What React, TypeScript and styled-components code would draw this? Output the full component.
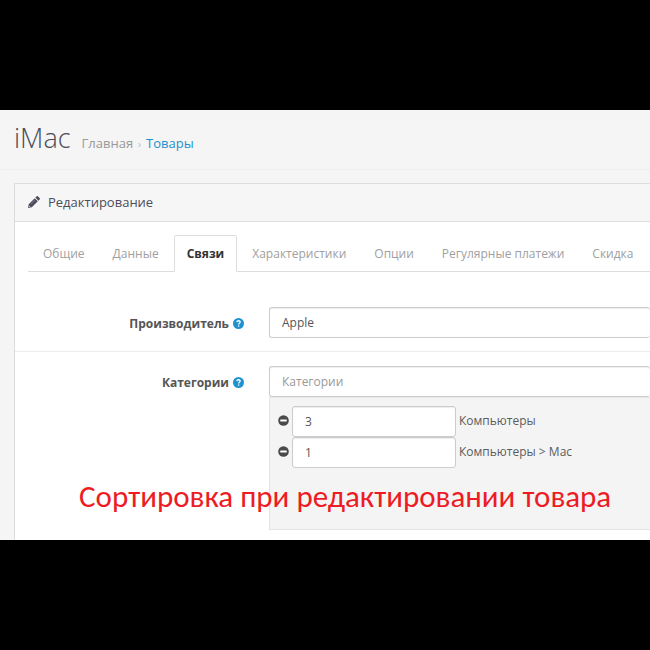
import React from "react";
import styled, { createGlobalStyle } from "styled-components";

const GlobalStyle = createGlobalStyle`
  *, *::before, *::after { box-sizing: border-box; }
  body {
    margin: 0;
    background: #000;
    color: #5c5c5c;
    font-family: "Open Sans", "Noto Sans", sans-serif;
    font-size: 12px;
    line-height: 18px;
  }
`;

const Frame = styled.div`
  min-height: 100vh;
  padding: 110px 0;
  background: #000;
`;

const Page = styled.main`
  position: relative;
  background: #f5f5f5;
  overflow: hidden;
`;

const PageHeader = styled.header`
  display: flex;
  align-items: baseline;
  gap: 11px;
  height: 60px;
  padding: 8px 14px 0;
  border-bottom: 1px solid #eee;
`;

const Title = styled.h1`
  margin: 0;
  color: #4c4d5a;
  font-size: 27px;
  font-weight: 300;
  line-height: 40px;
`;

const Breadcrumb = styled.nav`
  display: flex;
  align-items: baseline;
  gap: 5px;
  font-size: 13px;
`;

const Crumb = styled.a<{ $current?: boolean }>`
  color: ${(p) => (p.$current ? "#1e91cf" : "#999")};
  text-decoration: none;
`;

const Separator = styled.span`
  color: #bbb;
  font-size: 10px;
`;

const Panel = styled.section`
  margin: 13px 0 0 14px;
  border: 1px solid #dcdcdc;
  border-width: 1px 0 0 1px;
  background: #fff;
`;

const PanelHeading = styled.div`
  display: flex;
  align-items: center;
  gap: 8px;
  height: 38px;
  padding: 0 0 1px 13px;
  border-bottom: 1px solid #dcdcdc;
  background: #f6f6f6;
`;

const PanelTitle = styled.h2`
  margin: 0;
  color: #4c4d5a;
  font-size: 13px;
  font-weight: 400;
`;

const PanelBody = styled.div`
  padding: 13px 0 10px;
`;

const Tabs = styled.div`
  display: flex;
  gap: 2px;
  margin-left: 13px;
  padding-left: 2px;
  border-bottom: 1px solid #ddd;
`;

const Tab = styled.button<{ $active?: boolean }>`
  height: 37px;
  margin-bottom: -1px;
  padding: 0 12px;
  border: 1px solid ${(p) => (p.$active ? "#ddd" : "transparent")};
  border-bottom-color: ${(p) => (p.$active ? "#fff" : "transparent")};
  border-radius: 2px 2px 0 0;
  background: ${(p) => (p.$active ? "#fff" : "transparent")};
  color: ${(p) => (p.$active ? "#333" : "#a0a0a0")};
  font: ${(p) => (p.$active ? 700 : 400)} 12px/18px "Open Sans", "Noto Sans", sans-serif;
  white-space: nowrap;
`;

const Form = styled.form`
  padding-top: 21px;
`;

const FormRow = styled.div`
  display: grid;
  grid-template-columns: 229px 1fr;
  column-gap: 25px;
  padding: 14px 0 13px;

  & + & {
    border-top: 1px solid #ededed;
    padding-bottom: 0;
  }
`;

const Label = styled.label`
  display: flex;
  align-items: center;
  justify-content: flex-end;
  gap: 4px;
  height: 31px;
  padding-top: 2px;
  color: #555;
  font-weight: 700;
`;

const Input = styled.input<{ $compact?: boolean }>`
  display: block;
  width: ${(p) => (p.$compact ? "164px" : "100%")};
  height: 31px;
  padding: 0 12px;
  border: 1px solid #ccc;
  border-radius: 3px;
  border-right-width: ${(p) => (p.$compact ? "1px" : "0")};
  background: #fff;
  box-shadow: inset 0 1px 1px rgba(0, 0, 0, 0.07);
  color: #555;
  font: 400 12px/18px "Open Sans", "Noto Sans", sans-serif;
  outline: none;

  &::placeholder { color: #999; opacity: 1; }
`;

const Well = styled.div`
  height: 133px;
  padding: 9px 8px;
  border: 1px solid #e3e3e3;
  border-width: 0 0 1px 1px;
  background: #f4f4f4;
  box-shadow: inset 0 1px 1px rgba(0, 0, 0, 0.05);
`;

const CategoryRow = styled.div`
  display: flex;
  align-items: center;
  gap: 3px;
`;

const CategoryName = styled.span`
  padding-bottom: 2px;
`;

const RemoveButton = styled.button`
  display: flex;
  padding: 0 0 2px;
  border: 0;
  background: none;
`;

const Caption = styled.p`
  position: absolute;
  left: 79px;
  bottom: 26px;
  margin: 0;
  color: #ed1c24;
  font-family: Carlito, Calibri, "Noto Sans", sans-serif;
  font-size: 31px;
  line-height: 36px;
  white-space: nowrap;
`;

const PencilIcon = () => (
  <svg width="12" height="12" viewBox="0 0 12 12" fill="#4c4d5a" aria-hidden="true">
    <path d="M0 12 .7 8.200 6.700 2.200 9.800 5.300 3.800 11.300Z M7.300 1.600 8.500.4Q9.300-.3 10.100.4L11.600 1.900Q12.300 2.700 11.600 3.500L10.400 4.700Z" />
    <path d="M1 9.800 2.200 11" stroke="#f6f6f6" strokeWidth=".8" />
    <path d="M2.800 8 7 3.800" stroke="#a5a6ad" strokeWidth=".5" />
  </svg>
);

const HelpIcon = () => (
  <svg width="11" height="11" viewBox="0 0 11 11" fill="none" aria-hidden="true">
    <circle cx="5.500" cy="5.500" r="5.500" fill="#1e91cf" />
    <path d="M3.900 4.100C4 2.300 7.200 2.300 7.200 4.100 7.200 5.200 5.600 5.300 5.600 6.600" stroke="#fff" strokeWidth="1.300" />
    <path d="M4.900 7.400H6.300V8.700H4.900Z" fill="#fff" />
  </svg>
);

const MinusIcon = () => (
  <svg width="11" height="11" viewBox="0 0 11 11" aria-hidden="true">
    <circle cx="5.500" cy="5.500" r="5.300" fill="#4a4a4a" />
    <rect x="2.200" y="4.500" width="6.600" height="2" rx=".4" fill="#fff" />
  </svg>
);

const tabs = ["Общие", "Данные", "Связи", "Характеристики", "Опции", "Регулярные платежи", "Скидка"];

const categories = [
  { name: "Компьютеры", order: "3" },
  { name: "Компьютеры > Mac", order: "1" },
];

export default function App() {
  return (
    <Frame>
      <GlobalStyle />
      <Page>
        <PageHeader>
          <Title>iMac</Title>
          <Breadcrumb>
            <Crumb href="#home">Главная</Crumb>
            <Separator>›</Separator>
            <Crumb href="#products" $current>Товары</Crumb>
          </Breadcrumb>
        </PageHeader>
        <Panel>
          <PanelHeading>
            <PencilIcon />
            <PanelTitle>Редактирование</PanelTitle>
          </PanelHeading>
          <PanelBody>
            <Tabs role="tablist">
              {tabs.map((tab) => (
                <Tab key={tab} type="button" role="tab" aria-selected={tab === "Связи"} $active={tab === "Связи"}>
                  {tab}
                </Tab>
              ))}
            </Tabs>
            <Form>
              <FormRow>
                <Label htmlFor="manufacturer">Производитель <HelpIcon /></Label>
                <Input id="manufacturer" type="text" defaultValue="Apple" />
              </FormRow>
              <FormRow>
                <Label htmlFor="category">Категории <HelpIcon /></Label>
                <div>
                  <Input id="category" type="text" placeholder="Категории" />
                  <Well>
                    {categories.map(({ name, order }) => (
                      <CategoryRow key={name}>
                        <RemoveButton type="button" aria-label={`Удалить ${name}`}><MinusIcon /></RemoveButton>
                        <Input $compact type="text" defaultValue={order} aria-label={name} />
                        <CategoryName>{name}</CategoryName>
                      </CategoryRow>
                    ))}
                  </Well>
                </div>
              </FormRow>
            </Form>
          </PanelBody>
        </Panel>
        <Caption>Сортировка при редактировании товара</Caption>
      </Page>
    </Frame>
  );
}
